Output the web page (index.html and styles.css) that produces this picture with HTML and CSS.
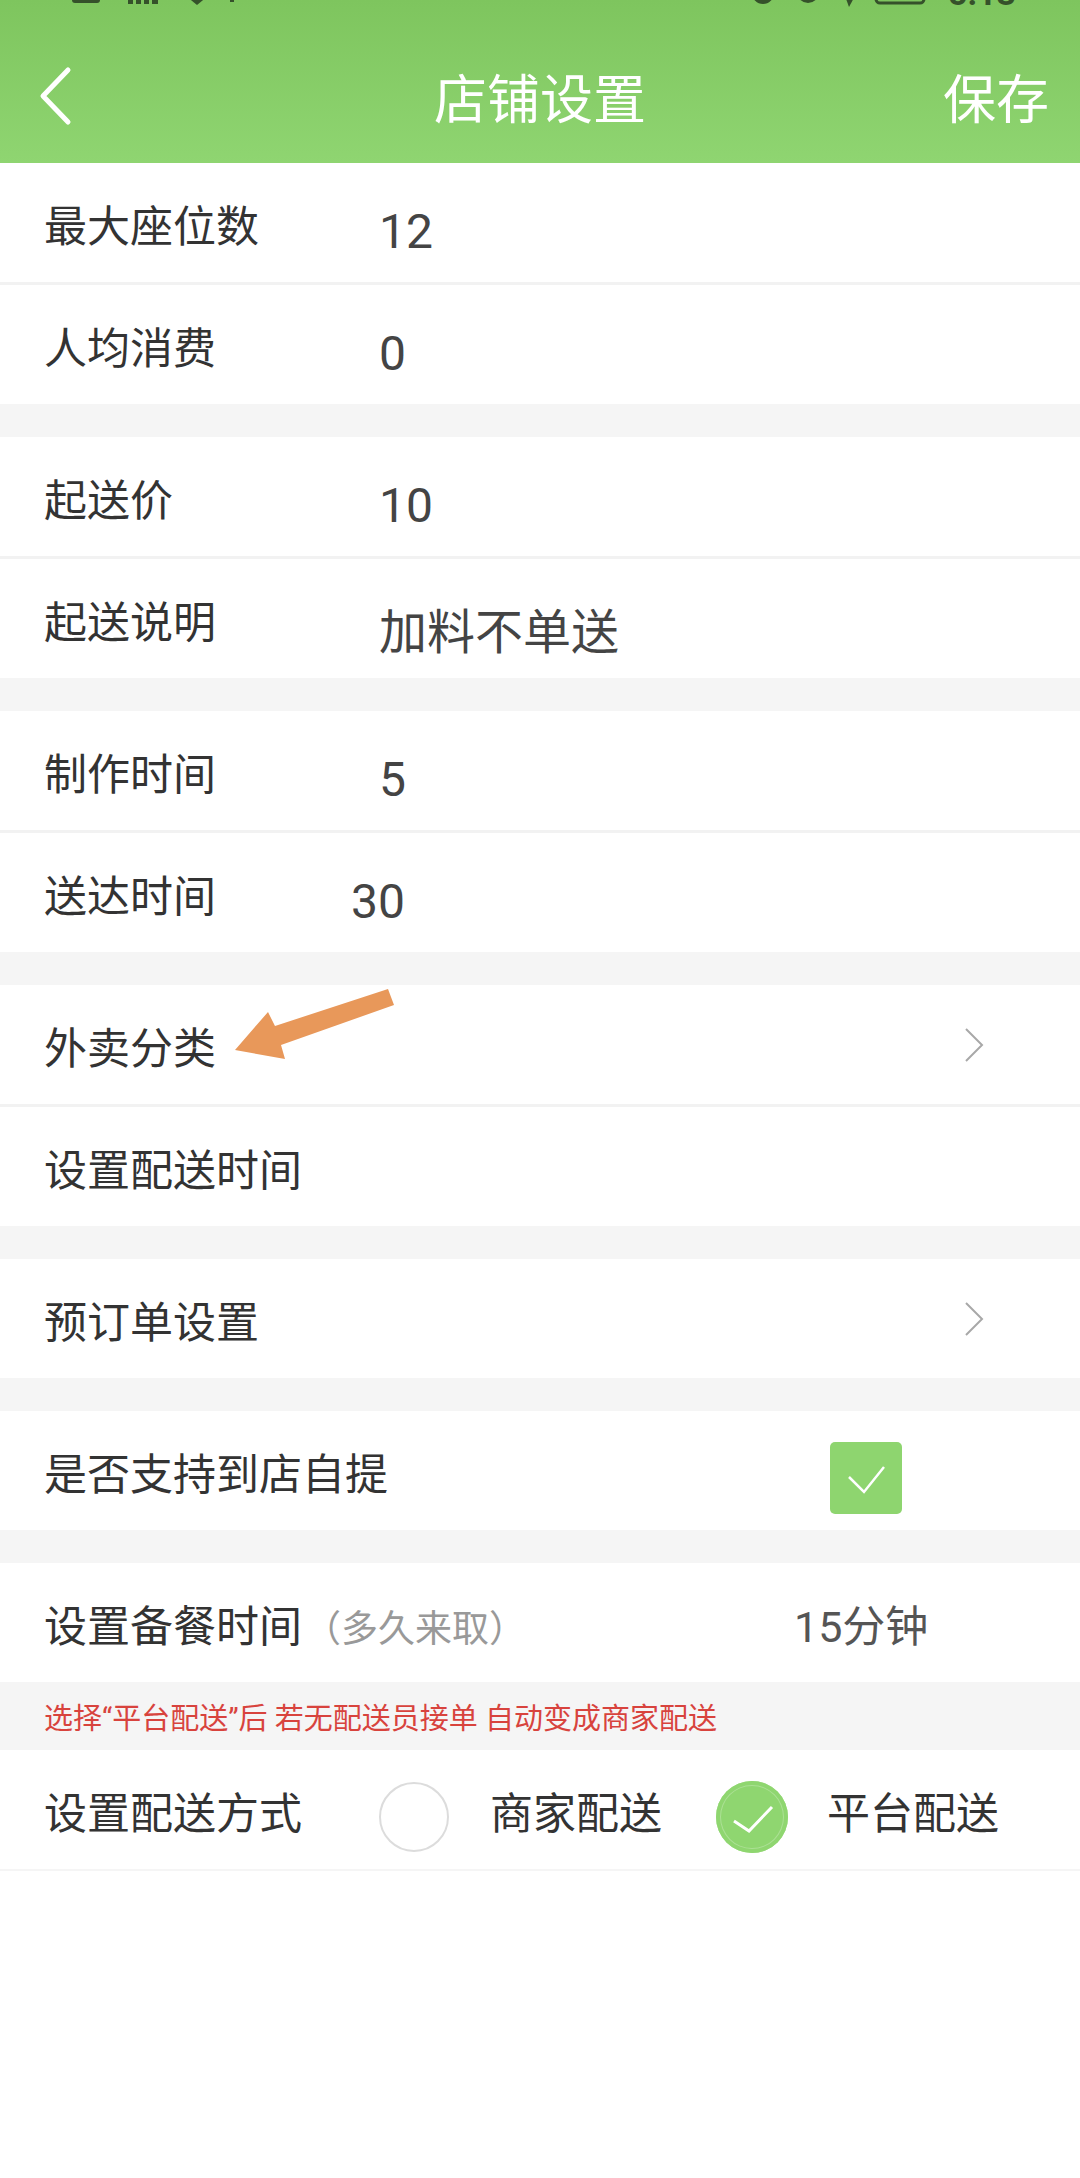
FILE: index.html
```html
<!doctype html>
<html lang="zh-CN">
  <head>
    <meta charset="UTF-8" />
    <meta name="viewport" content="width=device-width, initial-scale=1.0" />
    <title>店铺设置</title>
    <link rel="stylesheet" href="styles.css">
  </head>
  <body>
    <div class="header">
      <svg class="status" width="1080" height="28" viewBox="0 0 1080 28">
        <g fill="#35512a">
          <rect x="72" y="-10" width="28" height="13" rx="3" />
          <rect x="128" y="-6" width="5" height="10" />
          <rect x="136" y="-6" width="5" height="10" />
          <rect x="144" y="-6" width="5" height="10" />
          <rect x="152" y="-6" width="6" height="10" />
          <path d="M186 -4 L197 5 L208 -4 Z" />
          <rect x="230" y="-4" width="4" height="6" />
          <circle cx="763" cy="-7" r="9" fill="none" stroke="#35512a" stroke-width="4" />
          <circle cx="808" cy="-8" r="11" />
          <path d="M845 -4 L855 -4 L849 7 Z" />
          <rect x="876" y="-20" width="48" height="23" rx="4" fill="none" stroke="#35512a" stroke-width="3" />
          <text x="948" y="5" font-size="34" font-weight="bold" font-family="Roboto">5:13</text>
        </g>
      </svg>
      <div class="toolbar">
        <svg class="back" width="40" height="60" viewBox="0 0 40 60">
          <path d="M30 4 L5 30 L30 56" fill="none" stroke="#fff" stroke-width="5" stroke-linecap="round" stroke-linejoin="round" />
        </svg>
        <div class="title">店铺设置</div>
        <div class="save">保存</div>
      </div>
    </div>

    <div class="main">
      <div class="group">
        <div class="row">
          <div class="label">最大座位数</div>
          <div class="value">12</div>
        </div>
        <div class="row">
          <div class="label">人均消费</div>
          <div class="value">0</div>
        </div>
      </div>

      <div class="group">
        <div class="row">
          <div class="label">起送价</div>
          <div class="value">10</div>
        </div>
        <div class="row">
          <div class="label">起送说明</div>
          <div class="value">加料不单送</div>
        </div>
      </div>

      <div class="group">
        <div class="row">
          <div class="label">制作时间</div>
          <div class="value">5</div>
        </div>
        <div class="row">
          <div class="label">送达时间</div>
          <div class="value value-left">30</div>
        </div>
      </div>

      <div class="group">
        <div class="row row-link">
          <div class="label">外卖分类</div>
          <div class="more">
            <svg width="20" height="34" viewBox="0 0 20 34">
              <path d="M2 1 L18 17 L2 33" fill="none" stroke="#a8a8a8" stroke-width="2" />
            </svg>
          </div>
          <svg class="arrow" width="180" height="80" viewBox="0 0 180 80">
            <polygon points="15,65 48,27 55,41 168,4 174,20 61,60 65,74" fill="#e8985a" />
          </svg>
        </div>
        <div class="row">
          <div class="label">设置配送时间</div>
        </div>
      </div>

      <div class="group">
        <div class="row">
          <div class="label">预订单设置</div>
          <div class="more">
            <svg width="20" height="34" viewBox="0 0 20 34">
              <path d="M2 1 L18 17 L2 33" fill="none" stroke="#a8a8a8" stroke-width="2" />
            </svg>
          </div>
        </div>
      </div>

      <div class="group">
        <div class="row">
          <div class="label label-grow">是否支持到店自提</div>
          <div class="check-cell">
            <div class="checkbox">
              <svg width="72" height="72" viewBox="0 0 72 72">
                <path d="M19 35 L34 50 L54 25" fill="none" stroke="#fff" stroke-width="2.5" />
              </svg>
            </div>
          </div>
        </div>
      </div>

      <div class="group group-last">
        <div class="row">
          <div class="label label-grow">设置备餐时间<span class="hint">（多久来取）</span></div>
          <div class="minutes">15分钟</div>
        </div>
        <div class="note">选择“平台配送”后 若无配送员接单 自动变成商家配送</div>
        <div class="row">
          <div class="label">设置配送方式</div>
          <div class="radio"></div>
          <div class="radio-text">商家配送</div>
          <div class="radio radio-on">
            <svg width="72" height="72" viewBox="0 0 72 72">
              <path d="M18 40 L33 50 L56 26" fill="none" stroke="#fff" stroke-width="3" />
            </svg>
          </div>
          <div class="radio-text radio-text-on">平台配送</div>
        </div>
      </div>
    </div>
  </body>
</html>
```

FILE: styles.css
```css
* {
  margin: 0;
  padding: 0;
  box-sizing: border-box;
}

body {
  font-family: Roboto, "Noto Sans CJK SC", sans-serif;
  background: white;
  width: 1080px;
  min-height: 2178px;
  color: #333;
}

.header {
  height: 163px;
  background: linear-gradient(180deg, #7ec55e 0%, #8fd571 100%);
}

.status {
  display: block;
}

.toolbar {
  height: 135px;
  display: grid;
  grid-template-columns: 1fr auto 1fr;
  align-items: center;
}

.back {
  display: block;
  margin-left: 38px;
}

.title {
  font-size: 53px;
  color: white;
}

.save {
  font-size: 53px;
  color: white;
  justify-self: end;
  padding-right: 31px;
}

.main {
  display: flex;
  flex-direction: column;
  gap: 33px;
  background: #f5f5f5;
}

.group {
  display: flex;
  flex-direction: column;
  gap: 3px;
  background: #f2f2f2;
}

.group-last {
  gap: 0;
  border-bottom: 2px solid #f5f5f5;
}

.row {
  height: 119px;
  background: white;
  display: flex;
  align-items: center;
  padding-left: 44px;
}

.row-link {
  position: relative;
}

.label {
  width: 335px;
  flex-shrink: 0;
  font-size: 43px;
  color: #333;
  white-space: nowrap;
}

.label-grow {
  width: auto;
  flex: 1;
}

.hint {
  font-size: 37px;
  color: #999;
  margin-left: 2px;
}

.value {
  font-size: 48px;
  color: #444;
  padding-top: 18px;
}

.value-left {
  margin-left: -28px;
}

.more {
  margin-left: auto;
  width: 116px;
  display: flex;
}

.more svg {
  display: block;
}

.arrow {
  position: absolute;
  left: 220px;
  top: 0;
}

.check-cell {
  margin-left: auto;
  width: 250px;
  padding-top: 14px;
}

.checkbox {
  width: 72px;
  height: 72px;
  border-radius: 5px;
  background: #8ed56f;
}

.checkbox svg {
  display: block;
}

.minutes {
  width: 286px;
  font-size: 43px;
  color: #555;
}

.note {
  height: 68px;
  background: #f5f5f5;
  display: flex;
  align-items: center;
  padding-left: 44px;
  font-size: 29px;
  color: #d8433d;
}

.radio {
  width: 70px;
  height: 70px;
  flex-shrink: 0;
  border: 2px solid #dcdcdc;
  border-radius: 50%;
  margin-top: 15px;
}

.radio-on {
  width: 72px;
  height: 72px;
  margin-left: 54px;
  border: none;
  background: #8fd670;
  box-shadow: inset 0 0 0 4px #8fd670, inset 0 0 0 5px rgba(255, 255, 255, 0.25);
}

.radio-on svg {
  display: block;
}

.radio-text {
  font-size: 43px;
  color: #333;
  margin-left: 41px;
}

.radio-text-on {
  margin-left: 39px;
}
```
